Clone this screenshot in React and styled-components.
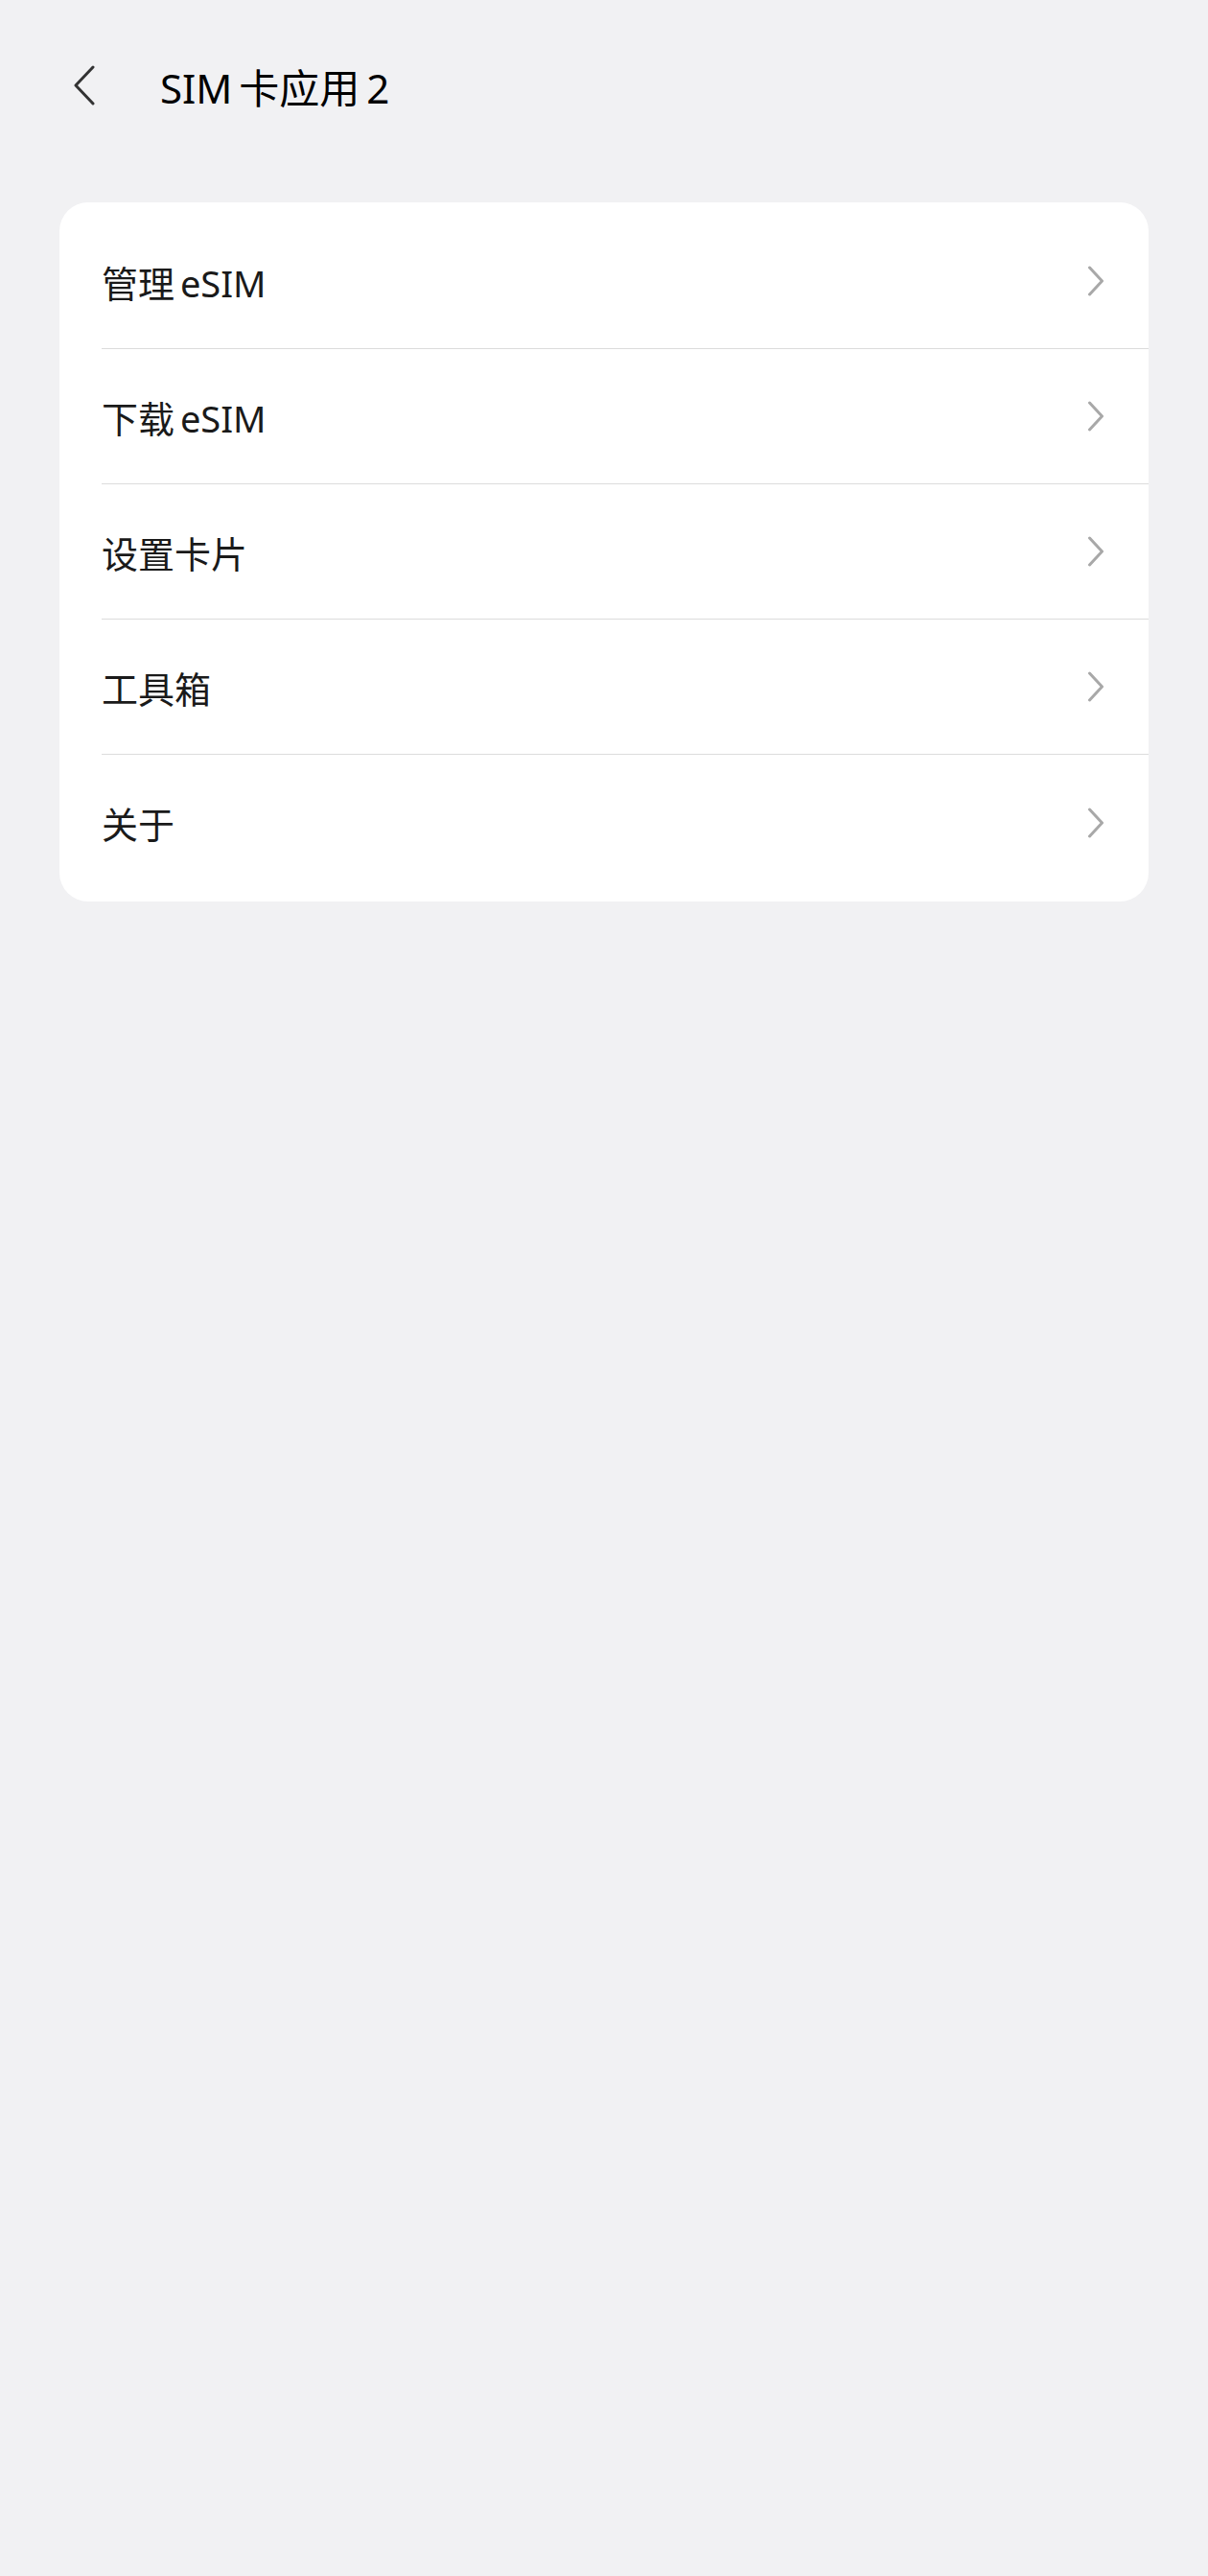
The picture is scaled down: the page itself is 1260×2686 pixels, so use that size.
import React from "react";
import styled, { createGlobalStyle } from "styled-components";

const Global = createGlobalStyle`
  html, body {
    margin: 0;
    padding: 0;
    background: #f1f1f3;
  }
  body {
    font-family: "Noto Sans", "Noto Sans CJK SC", sans-serif;
    -webkit-font-smoothing: antialiased;
  }
`;

const Page = styled.div`
  min-height: 2686px;
  background: #f1f1f3;
  padding: 0 62px;
  box-sizing: border-box;
`;

const Header = styled.div`
  height: 178px;
  display: flex;
  align-items: center;
  margin-bottom: 33px;
`;

const BackButton = styled.button`
  border: 0;
  background: none;
  padding: 0;
  margin-left: 14px;
  width: 30px;
  height: 44px;
  display: flex;
  align-items: center;
  cursor: pointer;
`;

const Title = styled.h1`
  margin: 0 0 0 61px;
  font-size: 42px;
  font-weight: 400;
  color: #000;
  word-spacing: -4px;
`;

const Card = styled.div`
  background: #fff;
  border-radius: 30px;
  padding: 12px 0;
`;

const Row = styled.div`
  height: 141px;
  margin-left: 44px;
  padding-right: 46px;
  display: flex;
  align-items: center;
  justify-content: space-between;
  border-bottom: ${(p) => (p.last ? "none" : "1.5px solid #dcdcdc")};
  box-sizing: border-box;
  cursor: pointer;
`;

const Label = styled.span`
  font-size: 38px;
  color: #1a1a1a;
  word-spacing: -4px;
`;

function Chevron() {
  return (
    <svg width="18" height="32" viewBox="0 0 18 32">
      <path d="M2.5 2 L15.5 16 L2.5 30" fill="none" stroke="#a8a8a8" strokeWidth="3" strokeLinecap="round" strokeLinejoin="round" />
    </svg>
  );
}

function BackArrow() {
  return (
    <svg width="24" height="42" viewBox="0 0 24 42">
      <path d="M21 2 L3 21 L21 40" fill="none" stroke="#333" strokeWidth="3" strokeLinecap="round" strokeLinejoin="round" />
    </svg>
  );
}

const items = ["管理 eSIM", "下载 eSIM", "设置卡片", "工具箱", "关于"];

export default function App() {
  return (
    <>
      <Global />
      <Page>
        <Header>
          <BackButton aria-label="返回">
            <BackArrow />
          </BackButton>
          <Title>SIM 卡应用 2</Title>
        </Header>
        <Card>
          {items.map((item, i) => (
            <Row key={item} last={i === items.length - 1}>
              <Label>{item}</Label>
              <Chevron />
            </Row>
          ))}
        </Card>
      </Page>
    </>
  );
}
